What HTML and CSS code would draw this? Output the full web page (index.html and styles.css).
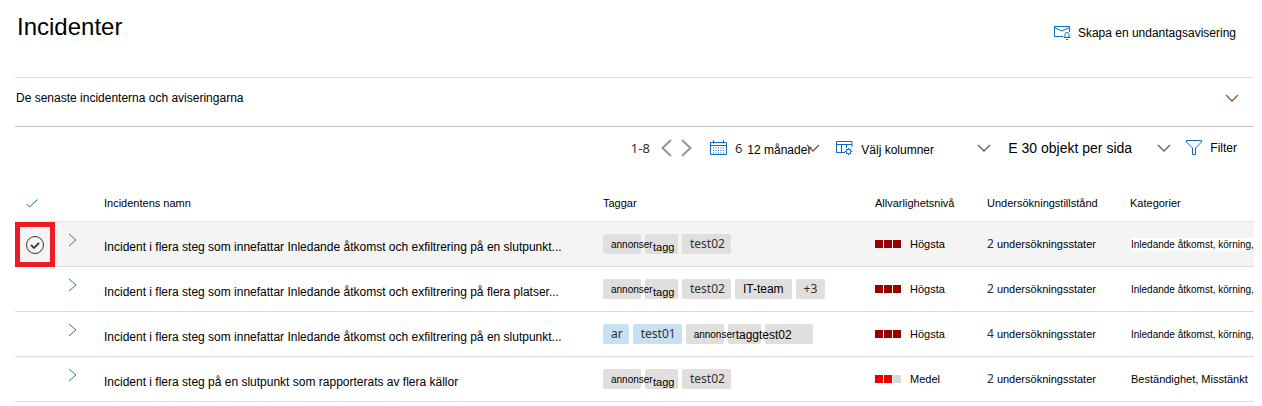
FILE: index.html
```
<!DOCTYPE html>
<html lang="sv">
<head>
<meta charset="utf-8">
<title>Incidenter</title>
<link rel="stylesheet" href="styles.css">
</head>
<body>
<svg class="defs" aria-hidden="true">
  <symbol id="right" viewBox="0 0 10 14"><path d="M1 1l7 6-7 6"/></symbol>
  <symbol id="down" viewBox="0 0 14 8"><path d="M1 1l6 6 6-6"/></symbol>
</svg>
<main class="page">
  <header class="top">
    <h1 class="title">Incidenter</h1>
    <button class="action" type="button">
      <svg class="blue" width="17" height="14" viewBox="0 0 17 14"><path d="M9 10.500H.5V.5h15V6M.5 1.500L8 5l7.500-3.500M9.500 11.500h7M11 11.500V8.500a2 2 0 0 1 4 0V11.500M12 13.500h2"/></svg>
      Skapa en undantagsavisering
    </button>
  </header>
  <button class="summary" type="button">
    <span>De senaste incidenterna och aviseringarna</span>
    <svg class="chev brown" width="14" height="8"><use href="#down"/></svg>
  </button>
  <div class="toolbar">
    <div class="pager">
      <span class="ui range">1-8</span>
      <button type="button" aria-label="Föregående"><svg class="grey" width="11" height="18" viewBox="0 0 11 18"><path d="M10 1L1.500 9l8.500 8"/></svg></button>
      <button type="button" aria-label="Nästa"><svg class="grey" width="11" height="18" viewBox="0 0 11 18"><path d="M1 1l8.500 8L1 17"/></svg></button>
    </div>
    <label class="period">
      <svg class="blue" width="17" height="16" viewBox="0 0 17 16"><path d="M.5 2.500h16v12H.5zM.5 5.500h16M3.500 0v3.500M13.500 0v3.500"/><path d="M3 8h11M3 10.500h11M3 13h11" stroke-dasharray="1 1.500"/></svg>
      <span class="ui six">6</span>
      <select class="months" aria-label="Period"><option>12 månader</option></select>
      <svg class="chev lap" width="14" height="8"><use href="#down"/></svg>
    </label>
    <button class="columns" type="button">
      <svg class="blue" width="17" height="16" viewBox="0 0 17 16"><path d="M9 12.500H.5V1.500h15.500V7M.5 4.500H16M5.500 4.500v8M10.500 4.500V8"/><circle cx="12.500" cy="11.500" r="2.300"/><path d="M12.500 7.800v1.400M12.500 13.800v1.400M8.800 11.500h1.400M14.800 11.500h1.400M9.900 8.900l1 1M14.100 13.100l1 1M9.900 14.100l1-1M14.100 9.900l1-1"/></svg>
      <span class="low">Välj kolumner</span>
      <svg class="chev push" width="14" height="8"><use href="#down"/></svg>
    </button>
    <label class="size">
      <select class="per-page" aria-label="Objekt per sida"><option>E 30 objekt per sida</option></select>
      <svg class="chev" width="14" height="8"><use href="#down"/></svg>
    </label>
    <button class="filter" type="button">
      <svg class="blue" width="16" height="15" viewBox="0 0 16 15"><path d="M.5.5h15v1.500L9.500 8v6.500h-3V8L.5 2z"/></svg>
      Filter
    </button>
  </div>
  <table class="grid">
    <colgroup><col class="c-check"><col class="c-open"><col><col class="c-tags"><col class="c-sev"><col class="c-state"><col class="c-cat"></colgroup>
    <thead>
      <tr>
        <th><label class="tick"><input type="checkbox" aria-label="Markera alla"><svg class="blue" width="12" height="9" viewBox="0 0 12 9"><path d="M.5 5l3 3L11.500.5"/></svg></label></th>
        <th></th><th>Incidentens namn</th><th>Taggar</th><th>Allvarlighetsnivå</th><th>Undersökningstillstånd</th><th>Kategorier</th>
      </tr>
    </thead>
    <tbody>
      <tr class="selected">
        <td class="marked"><label class="tick"><input type="checkbox" checked aria-label="Markera incident"><svg class="dark" width="20" height="20" viewBox="0 0 20 20"><circle cx="10" cy="10" r="8.500"/><path d="M6 10l3 3 5-5" stroke-width="1.800"/></svg></label></td>
        <td><button class="open brown" type="button" aria-label="Expandera"><svg width="10" height="14"><use href="#right"/></svg></button></td>
        <td class="name">Incident i flera steg som innefattar Inledande åtkomst och exfiltrering på en slutpunkt...</td>
        <td><div class="tags"><span class="tag ad">annonser</span><span class="tag tg">tagg</span><span class="tag ui">test02</span></div></td>
        <td><div class="sev high"><i></i><i></i><i></i>Högsta</div></td>
        <td><div class="state"><span class="ui">2</span>undersökningsstater</div></td>
        <td><div class="cat small"><span>Inledande åtkomst, körning,</span></div></td>
      </tr>
      <tr>
        <td></td>
        <td><button class="open teal" type="button" aria-label="Expandera"><svg width="10" height="14"><use href="#right"/></svg></button></td>
        <td class="name">Incident i flera steg som innefattar Inledande åtkomst och exfiltrering på flera platser...</td>
        <td><div class="tags"><span class="tag ad">annonser</span><span class="tag tg">tagg</span><span class="tag ui">test02</span><span class="tag team">IT-team</span><span class="tag ui more">+3</span></div></td>
        <td><div class="sev high"><i></i><i></i><i></i>Högsta</div></td>
        <td><div class="state"><span class="ui">2</span>undersökningsstater</div></td>
        <td><div class="cat small"><span>Inledande åtkomst, körning,</span></div></td>
      </tr>
      <tr>
        <td></td>
        <td><button class="open brown" type="button" aria-label="Expandera"><svg width="10" height="14"><use href="#right"/></svg></button></td>
        <td class="name">Incident i flera steg som innefattar Inledande åtkomst och exfiltrering på en slutpunkt...</td>
        <td><div class="tags"><span class="tag ui sky">ar</span><span class="tag ui sky">test01</span><span class="tag ad">annonser</span><span class="tag tg joined">taggtest02</span><span class="tag blank"></span></div></td>
        <td><div class="sev high"><i></i><i></i><i></i>Högsta</div></td>
        <td><div class="state"><span class="ui">4</span>undersökningsstater</div></td>
        <td><div class="cat small"><span>Inledande åtkomst, körning,</span></div></td>
      </tr>
      <tr>
        <td></td>
        <td><button class="open teal" type="button" aria-label="Expandera"><svg width="10" height="14"><use href="#right"/></svg></button></td>
        <td class="name">Incident i flera steg på en slutpunkt som rapporterats av flera källor</td>
        <td><div class="tags"><span class="tag ad">annonser</span><span class="tag tg">tagg</span><span class="tag ui">test02</span></div></td>
        <td><div class="sev medium"><i></i><i></i><i></i>Medel</div></td>
        <td><div class="state"><span class="ui">2</span>undersökningsstater</div></td>
        <td><div class="cat"><span>Beständighet, Misstänkt</span></div></td>
      </tr>
    </tbody>
  </table>
</main>
</body>
</html>
```
FILE: styles.css
```
* { box-sizing: border-box; }
body {
  margin: 0;
  background: #fff;
  color: #000;
  font: 12px/16px "Liberation Sans", Arial, sans-serif;
}
.page { padding: 0 8px 0 15px; }
.defs { position: absolute; width: 0; height: 0; }
svg { display: block; flex: none; fill: none; stroke: currentColor; }
button, select {
  margin: 0; padding: 0; border: 0;
  background: none; color: inherit;
  font: inherit; text-align: left; white-space: nowrap;
}
select { appearance: none; }
.blue { color: #0f6cbd; }
.grey { color: #979593; stroke-width: 2; }
.dark { color: #3b3a39; }
.chev { color: #605e5c; stroke-width: 1.3; }
.brown { color: #8e562e; }
.teal { color: #2e7d9a; }
.ui { font-family: "Noto Sans", "Open Sans", sans-serif; color: #323130; }

.top {
  display: flex; justify-content: space-between; align-items: flex-start;
  height: 78px; padding: 12px 18px 0 2px;
  border-bottom: 1px solid #dcdcdc;
}
.title { margin: 0; font-size: 24px; line-height: 30px; font-weight: 400; }
.action { display: flex; align-items: center; gap: 7px; padding-top: 13px; }
.summary {
  display: flex; justify-content: space-between; align-items: center;
  width: 100%; height: 49px; padding: 0 15px 8px 1px;
  border-bottom: 1px solid #c2c2c2;
}

.toolbar {
  display: flex; justify-content: flex-end; align-items: center;
  height: 41px; padding-right: 17px;
}
.toolbar button, .toolbar label { display: flex; align-items: center; }
.pager { display: flex; align-items: center; gap: 9px; margin-right: 18px; }
.range { margin-right: 2px; font-size: 13px; }
.period { margin-right: 16px; }
.six { margin: 0 5px 0 8px; font-size: 13px; }
.months { width: 66px; padding-top: 4px; }
.lap { margin-left: -7px; }
.columns { width: 155px; margin-right: 17px; }
.low { margin-left: 8px; padding-top: 4px; }
.push { margin-left: auto; }
.size { width: 163px; margin-right: 15px; justify-content: space-between; }
.per-page { font-size: 14px; }
.filter { gap: 8px; }

.grid { width: 100%; border-collapse: separate; border-spacing: 0; table-layout: fixed; }
.c-check { width: 40px; }
.c-open { width: 49px; }
.c-tags { width: 272px; }
.c-sev { width: 112px; }
.c-state { width: 143px; }
.c-cat { width: 124px; }
.grid th {
  height: 54px; padding: 17px 0 0;
  border-bottom: 1px solid #e6e6e6;
  font-size: 11px; font-weight: 400; text-align: left; vertical-align: middle; white-space: nowrap;
}
.grid td { height: 45px; padding: 0; border-bottom: 1px solid #dcdcdc; vertical-align: middle; white-space: nowrap; }
.selected td { background: #f4f4f4; }
.grid .marked { border: 5px solid #ed1c24; }
.tick { display: grid; justify-items: center; align-items: center; }
th .tick { justify-items: start; padding-left: 11px; }
.tick input { grid-area: 1 / 1; appearance: none; width: 20px; height: 20px; margin: 0; }
.tick svg { grid-area: 1 / 1; }
.open { display: block; margin: 0 0 8px 13px; }
.grid .name { padding-top: 5px; overflow: hidden; }

.tags { display: flex; gap: 4px; }
.tag {
  height: 20px; padding: 0 8px;
  border-radius: 2px; background: #e1dfdd;
  line-height: 20px;
}
.tag.ui { padding-right: 6px; }
.tag.more { padding: 0 8px; }
.ad { position: relative; z-index: 2; width: 38px; font-size: 10px; line-height: 22px; }
.tg { width: 33px; font-size: 11px; line-height: 26px; }
.joined { position: relative; z-index: 1; font-size: 12px; line-height: 22px; }
.blank { width: 48px; }
.sky { background: #c7e0f4; }

.sev { display: flex; align-items: center; gap: 1px; font-size: 11px; }
.sev i { width: 8px; height: 8px; background: #990000; }
.sev i:nth-child(3) { margin-right: 8px; }
.medium i { background: #e60000; }
.medium i:nth-child(3) { background: #d8d8d8; }
.state { display: flex; gap: 3px; font-size: 11px; }
.state .ui { font-size: 12px; }
.cat { overflow: hidden; padding-left: 1px; }
.cat span { display: inline-block; background: #fff; font-size: 11px; line-height: 13px; }
.small span { font-size: 10px; }
```
